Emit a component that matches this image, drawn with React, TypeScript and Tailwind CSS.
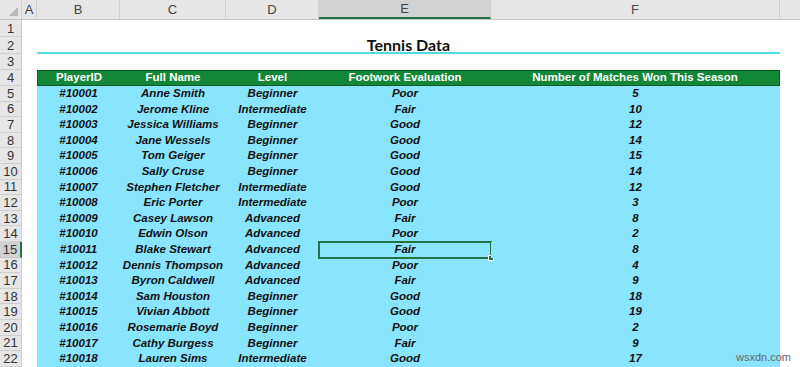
import React from "react";

type Player = [string, string, string, string, number];

const players: Player[] = [
  ["#10001", "Anne Smith", "Beginner", "Poor", 5],
  ["#10002", "Jerome Kline", "Intermediate", "Fair", 10],
  ["#10003", "Jessica Williams", "Beginner", "Good", 12],
  ["#10004", "Jane Wessels", "Beginner", "Good", 14],
  ["#10005", "Tom Geiger", "Beginner", "Good", 15],
  ["#10006", "Sally Cruse", "Beginner", "Good", 14],
  ["#10007", "Stephen Fletcher", "Intermediate", "Good", 12],
  ["#10008", "Eric Porter", "Intermediate", "Poor", 3],
  ["#10009", "Casey Lawson", "Advanced", "Fair", 8],
  ["#10010", "Edwin Olson", "Advanced", "Poor", 2],
  ["#10011", "Blake Stewart", "Advanced", "Fair", 8],
  ["#10012", "Dennis Thompson", "Advanced", "Poor", 4],
  ["#10013", "Byron Caldwell", "Advanced", "Fair", 9],
  ["#10014", "Sam Houston", "Beginner", "Good", 18],
  ["#10015", "Vivian Abbott", "Beginner", "Good", 19],
  ["#10016", "Rosemarie Boyd", "Beginner", "Poor", 2],
  ["#10017", "Cathy Burgess", "Beginner", "Fair", 9],
  ["#10018", "Lauren Sims", "Intermediate", "Good", 17],
];

const columns = ["A", "B", "C", "D", "E", "F"];
const grid = "grid grid-cols-[22px_15px_83px_106px_93px_172px_289px_1fr] grid-rows-[100%] leading-none";

function RowNum({ n, active }: { n: number; active?: boolean }) {
  return (
    <div
      className={`col-start-1 flex items-center justify-center border-b text-[13px] text-[#333] ${
        active
          ? "bg-[#d2d2d2] border-r-2 border-r-[#217346] border-b-[#c6c6c6]"
          : "bg-[#e6e6e6] border-r border-[#cfcfcf]"
      }`}
    >
      {n}
    </div>
  );
}

export default function App() {
  return (
    <div
      className="relative w-[800px] h-[367px] overflow-hidden bg-white"
      style={{ fontFamily: '"Liberation Sans", Arial, sans-serif' }}
    >
      {/* column letters */}
      <div className={`${grid} h-[20px] bg-[#e6e6e6] border-b border-[#c6c6c6] text-[13px] text-[#444]`}>
        <div className="relative border-r border-[#cfcfcf]">
          <div className="absolute right-[3px] bottom-[3px] w-0 h-0 border-l-[9px] border-l-transparent border-b-[9px] border-b-[#b7b7b7]" />
        </div>
        {columns.map((c) => (
          <div
            key={c}
            className={`flex items-center justify-center border-r border-[#cfcfcf] ${
              c === "E" ? "bg-[#d2d2d2] border-b-2 border-b-[#217346]" : ""
            }`}
          >
            {c}
          </div>
        ))}
        <div />
      </div>

      {/* rows 1-3: title band */}
      <div className={`${grid} h-[17px]`}>
        <RowNum n={1} />
      </div>
      <div className={`${grid} h-[17px]`}>
        <RowNum n={2} />
        <div
          className="col-start-3 col-span-5 flex items-start justify-center border-b-2 border-[#4fdbe8] text-[16px] font-bold text-[#111]"
          style={{ fontFamily: "Lato, sans-serif" }}
        >
          Tennis Data
        </div>
      </div>
      <div className={`${grid} h-[16px]`}>
        <RowNum n={3} />
      </div>

      {/* header row */}
      <div className={`${grid} h-[16px]`}>
        <RowNum n={4} />
        {["PlayerID", "Full Name", "Level", "Footwork Evaluation", "Number of Matches Won This Season"].map(
          (h, i) => (
            <div
              key={h}
              className={`flex items-center justify-center bg-[#128737] border-y border-[#0d5a26] text-[11.5px] font-bold text-white ${
                i === 0 ? "col-start-3 border-l" : ""
              } ${i === 4 ? "border-r" : ""}`}
            >
              {h}
            </div>
          )
        )}
      </div>

      {/* data rows */}
      {players.map((p, idx) => {
        const rowNo = idx + 5;
        const active = rowNo === 15;
        return (
          <div key={p[0]} className={`${grid} h-[15.6px] ${active ? "relative z-10" : ""}`}>
            <RowNum n={rowNo} active={active} />
            {p.map((v, i) => (
              <div
                key={i}
                className={`relative flex items-center justify-center bg-[#89e4fd] text-[11.5px] font-bold italic text-[#111] ${
                  i === 0 ? "col-start-3" : ""
                }`}
              >
                {v}
                {active && i === 3 && (
                  <div className="absolute -left-px -right-px -top-px -bottom-px border-2 border-[#217346]">
                    <div className="absolute -right-[4px] -bottom-[4px] w-[6px] h-[6px] bg-[#217346] border border-white" />
                  </div>
                )}
              </div>
            ))}
          </div>
        );
      })}

      <div className="absolute right-[9px] bottom-[2px] text-[11px] text-[#666]">wsxdn.com</div>
    </div>
  );
}
